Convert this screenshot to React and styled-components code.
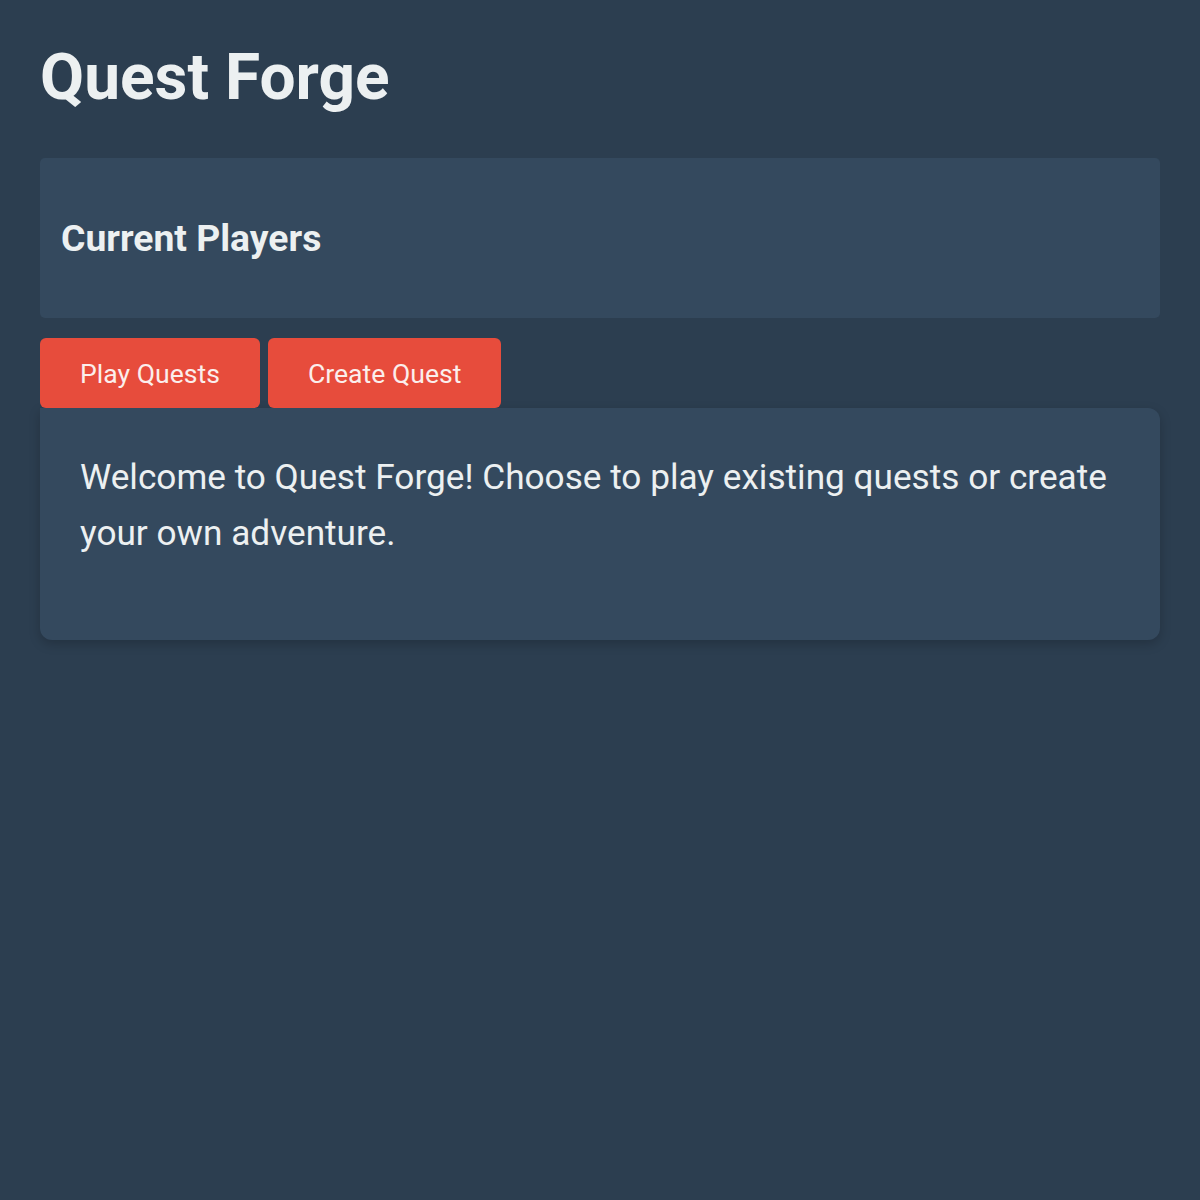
import React from 'react';
import styled, { createGlobalStyle } from 'styled-components';

const GlobalStyle = createGlobalStyle`
  html, body {
    margin: 0;
    padding: 0;
    background-color: #2c3e50;
    color: #ecf0f1;
    font-family: Roboto, "Liberation Sans", sans-serif;
  }
`;

const Page = styled.div`
  min-height: 1200px;
  box-sizing: border-box;
  padding: 40px;
`;

const Title = styled.h1`
  font-size: 64px;
  font-weight: 700;
  margin: 0 0 43px;
  line-height: normal;
`;

const PlayersPanel = styled.section`
  background-color: #34495e;
  border-radius: 5px;
  padding: 20px 21px;
  height: 160px;
  box-sizing: border-box;
  display: flex;
  align-items: center;
  margin-bottom: 20px;

  h2 {
    margin: 0;
    font-size: 37.3px;
    font-weight: 700;
  }
`;

const Tabs = styled.div`
  display: flex;
  gap: 8px;
`;

const TabButton = styled.button`
  background-color: #e74c3c;
  color: #fbeeec;
  border: none;
  border-radius: 6px;
  height: 70px;
  padding: 0 40px;
  font-family: inherit;
  font-size: 26.6px;
  cursor: pointer;
`;

const ContentPanel = styled.div`
  background-color: #34495e;
  border-radius: 0 12px 12px 12px;
  box-shadow: 0 4px 12px rgba(0, 0, 0, 0.2);
  padding: 41px 40px 79px;

  p {
    margin: 0;
    font-size: 35.2px;
    line-height: 56px;
  }
`;

export default function App() {
  return (
    <>
      <GlobalStyle />
      <Page>
        <Title>Quest Forge</Title>
        <PlayersPanel>
          <h2>Current Players</h2>
        </PlayersPanel>
        <Tabs>
          <TabButton>Play Quests</TabButton>
          <TabButton>Create Quest</TabButton>
        </Tabs>
        <ContentPanel>
          <p>
            Welcome to Quest Forge! Choose to play existing quests or create your own adventure.
          </p>
        </ContentPanel>
      </Page>
    </>
  );
}
